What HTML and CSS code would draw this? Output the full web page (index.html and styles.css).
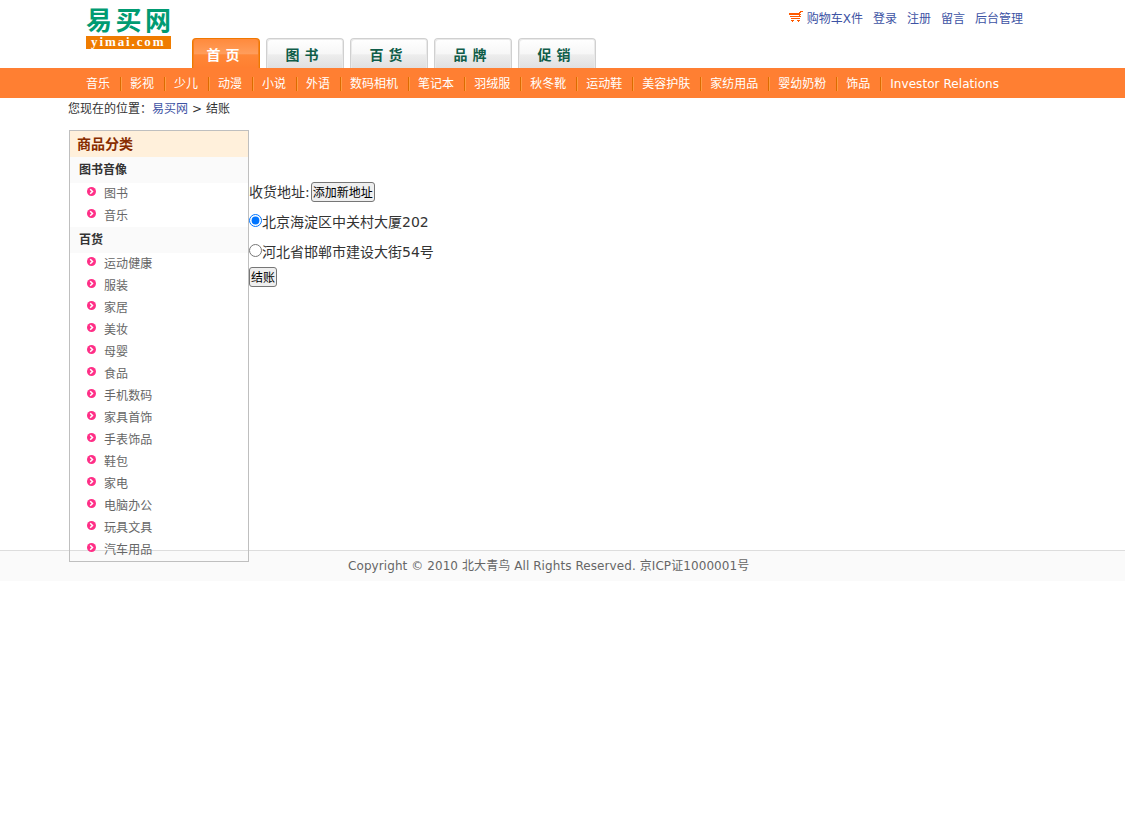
FILE: index.html
```html
<!DOCTYPE html>
<html lang="zh-CN">
<head>
<meta charset="utf-8">
<title>易买网 - 结账</title>
<link rel="stylesheet" href="styles.css">
</head>
<body>
<svg width="0" height="0" class="defs"><symbol id="dot" viewBox="0 0 9 9"><circle cx="4.5" cy="4.5" r="4.5" fill="#ff2f87"/><path d="M3.2 2.2 5.5 4.5 3.2 6.8" fill="none" stroke="#fff" stroke-width="1.5"/></symbol></svg>
<header class="header">
  <a class="logo"><span class="logo-cn">易买网</span><span class="logo-en">yimai.com</span></a>
  <nav class="tabs"><a class="tab current">首 页</a><a class="tab">图 书</a><a class="tab">百 货</a><a class="tab">品 牌</a><a class="tab">促 销</a></nav>
  <div class="help"><a class="cart"><svg width="14" height="12" viewBox="0 0 14 12"><path d="M0 4h12v1H0zM1 6h11v1H1zM2 8h9v1H2zM0 3h10v1H0zM11 1h3v1h-2v1h-1v3h-1V2h1zM2 10h3v1H4v1H3v-1H2zM8 10h3v1h-1v1H9v-1H8z" fill="#ff5a00"/></svg>购物车X件</a><a>登录</a><a>注册</a><a>留言</a><a>后台管理</a></div>
</header>
<nav class="subnav"><a>音乐</a><a>影视</a><a>少儿</a><a>动漫</a><a>小说</a><a>外语</a><a>数码相机</a><a>笔记本</a><a>羽绒服</a><a>秋冬靴</a><a>运动鞋</a><a>美容护肤</a><a>家纺用品</a><a>婴幼奶粉</a><a>饰品</a><a class="investor">Investor Relations</a></nav>
<div class="position">您现在的位置：<a>易买网</a><span class="gt">&gt;</span>结账</div>
<main class="main">
  <aside class="sidebar">
    <h2>商品分类</h2>
    <dl>
      <dt>图书音像</dt>
      <dd><svg><use href="#dot"/></svg>图书</dd>
      <dd><svg><use href="#dot"/></svg>音乐</dd>
      <dt>百货</dt>
      <dd><svg><use href="#dot"/></svg>运动健康</dd>
      <dd><svg><use href="#dot"/></svg>服装</dd>
      <dd><svg><use href="#dot"/></svg>家居</dd>
      <dd><svg><use href="#dot"/></svg>美妆</dd>
      <dd><svg><use href="#dot"/></svg>母婴</dd>
      <dd><svg><use href="#dot"/></svg>食品</dd>
      <dd><svg><use href="#dot"/></svg>手机数码</dd>
      <dd><svg><use href="#dot"/></svg>家具首饰</dd>
      <dd><svg><use href="#dot"/></svg>手表饰品</dd>
      <dd><svg><use href="#dot"/></svg>鞋包</dd>
      <dd><svg><use href="#dot"/></svg>家电</dd>
      <dd><svg><use href="#dot"/></svg>电脑办公</dd>
      <dd><svg><use href="#dot"/></svg>玩具文具</dd>
      <dd><svg><use href="#dot"/></svg>汽车用品</dd>
    </dl>
  </aside>
  <form class="address">
    <div class="row">收货地址:<button type="button" class="add">添加新地址</button></div>
    <label class="row"><input type="radio" name="address" checked>北京海淀区中关村大厦202</label>
    <label class="row"><input type="radio" name="address">河北省邯郸市建设大街54号</label>
    <button type="button" class="pay">结账</button>
  </form>
</main>
<footer class="footer"><span>Copyright © 2010 北大青鸟 All Rights Reserved. 京ICP证1000001号</span></footer>
</body>
</html>
```
FILE: styles.css
```css
* { box-sizing: border-box; margin: 0; padding: 0; }
body {
  background: #fff;
  color: #333;
  font: 12px/22px "DejaVu Sans", "Noto Sans CJK SC", sans-serif;
}
.defs { display: block; }
.header { display: flex; height: 68px; padding-left: 86px; }
.logo { width: 85px; margin-right: 21px; padding-top: 5px; }
.logo-cn {
  display: block;
  height: 31px;
  color: #009b72;
  font: bold 26px/28px "Noto Sans CJK SC", sans-serif;
  letter-spacing: 3.5px;
  white-space: nowrap;
}
.logo-en {
  display: block;
  height: 13px;
  background: #ef7c00;
  color: #fff;
  font: bold 13px/12px "Liberation Serif", serif;
  letter-spacing: 1.9px;
  padding-left: 5px;
  white-space: nowrap;
}
.tabs { display: flex; gap: 6px; align-items: flex-end; }
.tab {
  width: 78px;
  height: 30px;
  padding-right: 6px;
  border: 1px solid #d0d0d0;
  border-bottom: 0;
  border-radius: 4px 4px 0 0;
  background: linear-gradient(#fff 0, #f7f7f7 50%, #ededed 55%, #e0e0e0);
  box-shadow: inset 1px 1px #e9e9e9, inset -1px 0 #e9e9e9;
  color: #0f5d49;
  font-size: 14px;
  font-weight: bold;
  line-height: 32px;
  text-align: center;
}
.tab.current {
  width: 68px;
  border-color: #f07800;
  background: linear-gradient(#ff8a3c, #ff9d5b 50%, #ff8737 55%, #ff7f31);
  box-shadow: inset 1px 0 #f58220, inset -1px 0 #f58220;
  color: #fff;
}
.help { display: flex; gap: 10px; margin-left: auto; padding: 8px 102px 0 0; color: #3d53a4; }
.cart { display: flex; }
.cart svg { margin: 2px 4px 0 0; }
.subnav {
  display: flex;
  height: 30px;
  padding-left: 76px;
  background: #ff7f32;
  color: #fff;
  line-height: 32px;
}
.subnav a {
  padding: 0 10px;
  white-space: nowrap;
}
.subnav a + a {
  background: linear-gradient(90deg, #dc6b00 50%, #ff9c45 50%) left 0 top 9px / 2px 14px no-repeat;
}
.investor { letter-spacing: 0.06px; }
.position { height: 32px; padding-left: 68px; line-height: 23px; }
.position a { color: #3d53a4; }
.gt { margin: 0 4px; }
.main { display: flex; height: 420px; padding-left: 69px; }
.sidebar { position: relative; width: 180px; height: 432px; flex: none; border: 1px solid #bfbfbf; }
.sidebar h2 {
  height: 26px;
  padding-left: 7px;
  background: #fff0db;
  color: #882d00;
  font-size: 14px;
  line-height: 26px;
}
.sidebar dt { height: 26px; padding-left: 9px; background: #fafafa; font-weight: bold; line-height: 26px; }
.sidebar dd { display: flex; height: 22px; padding-left: 17px; color: #666; line-height: 23px; letter-spacing: 0.1px; }
.sidebar dd svg { width: 9px; height: 9px; margin: 4px 8px 0 0; }
.address { padding-top: 47px; font-size: 14px; }
.row { display: flex; align-items: center; height: 30px; white-space: nowrap; }
.row input { width: 13px; height: 13px; margin-bottom: 3px; }
.address button {
  display: block;
  height: 20px;
  border: 1px solid #767676;
  border-radius: 3px;
  background: #efefef;
  color: #000;
  font: 12px/18px "Noto Sans CJK SC", sans-serif;
}
.address .add { width: 64px; margin-left: 1px; }
.address .pay { width: 28px; }
.footer {
  height: 31px;
  padding-left: 348px;
  border-top: 1px solid #ddd;
  background: #fafafa;
  color: #666;
  line-height: 30px;
  letter-spacing: 0.08px;
  white-space: nowrap;
}
```
